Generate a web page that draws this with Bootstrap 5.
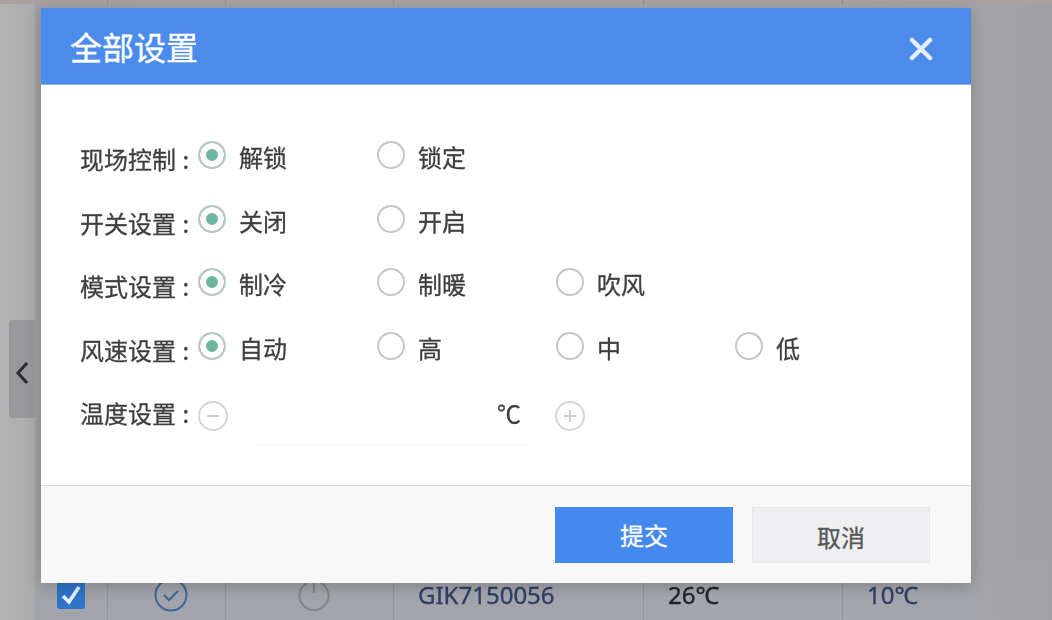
<!DOCTYPE html>
<html lang="zh-CN">
<head>
<meta charset="utf-8">
<title>全部设置</title>
<link href="https://cdn.jsdelivr.net/npm/bootstrap@5.3.0/dist/css/bootstrap.min.css" rel="stylesheet">
<style>
html,body{height:100%;}
body{width:1052px;height:620px;overflow:hidden;position:relative;font-family:"Noto Sans","Noto Sans CJK SC",sans-serif;background:linear-gradient(90deg,#b3b3b4 0,#acacae 34px,#a0a0a2 36px,#a6a6a8 90%,#a0a0a2 100%);}
.backdrop-top{height:4px;background:#ab9f9f;padding-left:35px;}
.backdrop-top>div{border-right:1px solid #8f8a8a;}
.backdrop-row{position:absolute;left:35px;right:0;bottom:0;height:60px;background:linear-gradient(90deg,#a2a4ab 0,#a4a6ad 85%,#a2a2a5 100%);}
.cell-a{width:73px;}.cell-b{width:118px;}.cell-c{width:168px;}.cell-d{width:250px;}.cell-e{width:199px;}.cell-f{flex:1;}
.backdrop-row>div{border-right:1px solid #94949a;padding-top:21px;font-size:24px;line-height:28px;color:#2f3f66;-webkit-text-stroke:.35px currentColor;}
.checkmark{width:28px;height:28px;background:#2f74c9;border-radius:3px;}
.side-tab{position:absolute;left:9px;top:320px;width:26px;height:98px;background:#98989a;border-radius:4px 0 0 4px;padding-top:7px;}
.dialog-box{position:absolute;left:41px;top:8px;width:930px;height:575px;border:0;border-radius:0;box-shadow:0 4px 14px rgba(0,0,0,.2);background:#fff;}
.dialog-head{height:77px;background:#4a8bec;color:#fff;padding:6px 38px 0 29px;border-bottom:1px solid #8db4f2;border-radius:0;}
.dialog-title{font-size:32px;line-height:1;font-weight:400;font-family:"Noto Sans CJK SC",sans-serif;margin-top:-6px;-webkit-text-stroke:.4px currentColor;}
.dialog-body{padding:45px 0 0 39px;height:400px;flex:none;color:#3e3e3e;font-family:"Noto Sans CJK SC",sans-serif;font-size:24px;line-height:34px;-webkit-text-stroke:.3px currentColor;}
.set-row{height:63.5px;}
.row-name{width:118px;padding-top:12px;white-space:nowrap;}
.row-name b{font-weight:400;margin-left:1px;}
.opt-cell{width:179px;}
.ring{flex:none;width:28px;height:28px;border-radius:50%;border:2px solid #c6c6c6;background:#fff;margin:11px 13px 0 0;}
.ring.on{background:#6eb5a2;box-shadow:inset 0 0 0 6px #fff;border-color:#bbc7c4;}
.opt-text{padding-top:10px;}
.step-btn{flex:none;width:30px;height:30px;border-radius:50%;border:2px solid #d5d5d5;background:#fff;position:relative;margin-top:17px;}
.step-btn::before,.step-btn.plus::after{content:"";position:absolute;left:7px;right:7px;top:12px;height:2px;background:#cfcfcf;}
.step-btn.plus::after{left:12px;right:auto;width:2px;height:auto;top:7px;bottom:7px;}
.temp-field{width:271px;height:61px;margin:0 28px;border-bottom:1px solid #f0f0f0;padding:12px 6px 0 0;color:#3e3e3e;text-align:right;}
.dialog-foot{height:98px;background:#f8f8f9;border-top:1px solid #dcdcdc;padding:21px 41px 0 0;gap:19px;align-items:flex-start;justify-content:flex-end;border-radius:0;flex-wrap:nowrap;}
.dialog-foot .btn{width:178px;height:56px;border-radius:0;font-size:24px;line-height:34px;padding:0;margin:0;font-family:"Noto Sans CJK SC",sans-serif;-webkit-text-stroke:.3px currentColor;}
.no-btn span{position:relative;top:2px;}
.go-btn{background:#4489ed;border:0;color:#fff;}
.no-btn{background:#efeff1;border:1px solid #e6e6e8;color:#555;}
.blur-soft{filter:blur(.6px);}
.icon-shift{margin:-3px 0 0 9px;}
</style>
</head>
<body>
<div class="backdrop-top d-flex">
  <div class="cell-a"></div><div class="cell-b"></div><div class="cell-c"></div><div class="cell-d"></div><div class="cell-e"></div>
</div>
<div class="backdrop-row d-flex">
  <div class="cell-a d-flex justify-content-center"><svg class="checkmark blur-soft" viewBox="0 0 28 28"><path d="M6 15l6 6L22 6" fill="none" stroke="#e8f0fb" stroke-width="3.5"/></svg></div>
  <div class="cell-b d-flex justify-content-center"><svg class="icon-shift blur-soft" width="34" height="34" viewBox="0 0 34 34" fill="none" stroke="#3f6599" stroke-width="2"><circle cx="17" cy="17" r="15.5"/><path d="M10 17l5 5 9-9"/></svg></div>
  <div class="cell-c d-flex justify-content-center"><svg class="icon-shift blur-soft" width="32" height="34" viewBox="0 0 32 34" fill="none" stroke="#7d8794" stroke-width="2"><path d="M9 5a14.500 14.500 0 1 0 14 0M16 2v13"/></svg></div>
  <div class="cell-d ps-4"><span class="blur-soft d-inline-block">GIK7150056</span></div>
  <div class="cell-e ps-4 text-dark"><span class="blur-soft d-inline-block">26℃</span></div>
  <div class="cell-f ps-4 border-0"><span class="blur-soft d-inline-block">10℃</span></div>
</div>
<div class="side-tab d-flex align-items-center justify-content-center">
  <svg class="blur-soft" width="14" height="26" viewBox="0 0 14 26" fill="none" stroke="#2c2c30" stroke-width="3"><path d="M12 3L3 13l9 10"/></svg>
</div>

<div class="modal-content dialog-box blur-soft">
  <div class="modal-header dialog-head d-flex justify-content-between align-items-center">
    <h5 class="modal-title dialog-title">全部设置</h5>
    <svg width="24" height="24" viewBox="0 0 24 24" fill="none" stroke="#e6eefc" stroke-width="4.500" stroke-linecap="round" aria-label="关闭"><path d="M3 3l18 18M21 3L3 21"/></svg>
  </div>
  <div class="modal-body dialog-body">
    <div class="set-row d-flex">
      <div class="row-name">现场控制<b> :</b></div>
      <div class="opt-cell d-flex"><span class="ring on"></span><span class="opt-text">解锁</span></div>
      <div class="opt-cell d-flex"><span class="ring"></span><span class="opt-text">锁定</span></div>
    </div>
    <div class="set-row d-flex">
      <div class="row-name">开关设置<b> :</b></div>
      <div class="opt-cell d-flex"><span class="ring on"></span><span class="opt-text">关闭</span></div>
      <div class="opt-cell d-flex"><span class="ring"></span><span class="opt-text">开启</span></div>
    </div>
    <div class="set-row d-flex">
      <div class="row-name">模式设置<b> :</b></div>
      <div class="opt-cell d-flex"><span class="ring on"></span><span class="opt-text">制冷</span></div>
      <div class="opt-cell d-flex"><span class="ring"></span><span class="opt-text">制暖</span></div>
      <div class="opt-cell d-flex"><span class="ring"></span><span class="opt-text">吹风</span></div>
    </div>
    <div class="set-row d-flex">
      <div class="row-name">风速设置<b> :</b></div>
      <div class="opt-cell d-flex"><span class="ring on"></span><span class="opt-text">自动</span></div>
      <div class="opt-cell d-flex"><span class="ring"></span><span class="opt-text">高</span></div>
      <div class="opt-cell d-flex"><span class="ring"></span><span class="opt-text">中</span></div>
      <div class="opt-cell d-flex"><span class="ring"></span><span class="opt-text">低</span></div>
    </div>
    <div class="set-row d-flex">
      <div class="row-name">温度设置<b> :</b></div>
      <span class="step-btn"></span>
      <div class="temp-field">℃</div>
      <span class="step-btn plus"></span>
    </div>
  </div>
  <div class="modal-footer dialog-foot d-flex">
    <button type="button" class="btn go-btn">提交</button>
    <button type="button" class="btn no-btn"><span>取消</span></button>
  </div>
</div>
<script src="https://cdn.jsdelivr.net/npm/bootstrap@5.3.0/dist/js/bootstrap.bundle.min.js"></script>
</body>
</html>
